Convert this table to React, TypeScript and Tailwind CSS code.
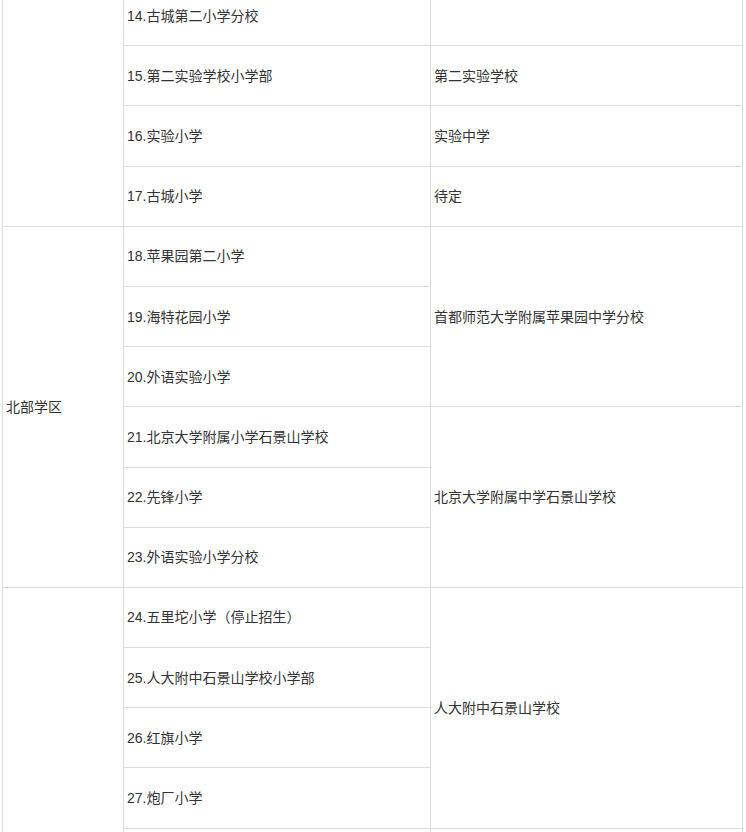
const groups = [
  {
    district: "",
    rows: [
      { school: "14.古城第二小学分校", middle: "", span: 1 },
      { school: "15.第二实验学校小学部", middle: "第二实验学校", span: 1 },
      { school: "16.实验小学", middle: "实验中学", span: 1 },
      { school: "17.古城小学", middle: "待定", span: 1 },
    ],
  },
  {
    district: "北部学区",
    rows: [
      { school: "18.苹果园第二小学", middle: "首都师范大学附属苹果园中学分校", span: 3 },
      { school: "19.海特花园小学", middle: null, span: 0 },
      { school: "20.外语实验小学", middle: null, span: 0 },
      { school: "21.北京大学附属小学石景山学校", middle: "北京大学附属中学石景山学校", span: 3 },
      { school: "22.先锋小学", middle: null, span: 0 },
      { school: "23.外语实验小学分校", middle: null, span: 0 },
    ],
  },
  {
    district: "",
    rows: [
      { school: "24.五里坨小学（停止招生）", middle: "人大附中石景山学校", span: 4 },
      { school: "25.人大附中石景山学校小学部", middle: null, span: 0 },
      { school: "26.红旗小学", middle: null, span: 0 },
      { school: "27.炮厂小学", middle: null, span: 0 },
      { school: "", middle: "", span: 1 },
    ],
  },
];

const cell = "border border-[#dddddd] px-[3px] align-middle text-left font-normal";

export default function App() {
  return (
    <div className="h-[832px] w-[746px] overflow-hidden bg-white pl-[2px]">
      <table
        className="-mt-[15px] w-[740px] table-fixed border-collapse text-[14px] leading-[20px] text-[#333333]"
        style={{ fontFamily: '"Liberation Sans", "Noto Sans CJK SC", sans-serif' }}
      >
        <colgroup>
          <col className="w-[121px]" />
          <col className="w-[307px]" />
          <col className="w-[312px]" />
        </colgroup>
        <tbody>
          {groups.map((g, gi) =>
            g.rows.map((r, ri) => (
              <tr key={`${gi}-${ri}`} className="h-[60.2px]">
                {ri === 0 && (
                  <td className={cell} rowSpan={g.rows.length}>
                    {g.district}
                  </td>
                )}
                <td className={cell}>{r.school}</td>
                {r.middle !== null && (
                  <td className={cell} rowSpan={r.span}>
                    {r.middle}
                  </td>
                )}
              </tr>
            ))
          )}
        </tbody>
      </table>
    </div>
  );
}
